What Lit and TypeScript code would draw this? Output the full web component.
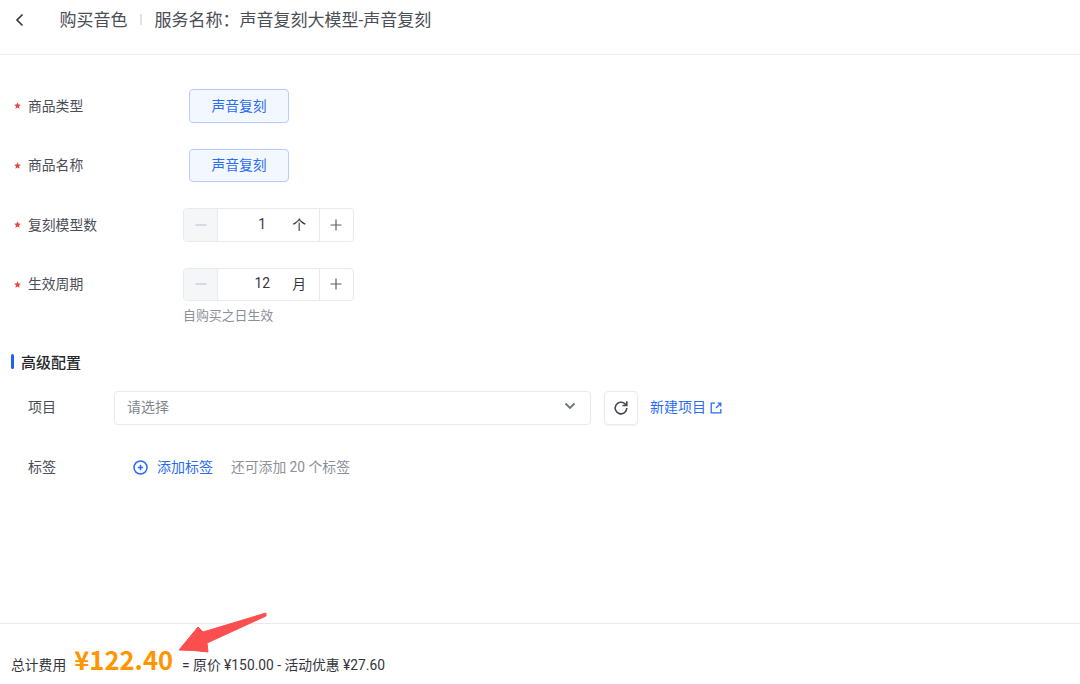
import { LitElement, html, css, svg } from "lit";
import { customElement } from "lit/decorators.js";

const stepper = (value: string, unit: string) => html`
  <div class="stepper">
    <span class="step minus"><svg width="12" height="12" viewBox="0 0 12 12"><path d="M0.5 6H11.5" stroke="#c3c8d2" stroke-width="1.2"/></svg></span>
    <span class="val"><span class="num">${value}</span><span class="unit">${unit}</span></span>
    <span class="step plus"><svg width="12" height="12" viewBox="0 0 12 12"><path d="M0.5 6H11.5M6 0.5V11.5" stroke="#5a6070" stroke-width="1.2"/></svg></span>
  </div>`;

const star = html`<span class="star"><svg width="7" height="7" viewBox="0 0 10 10"><path d="M5 0.3L6.4 3.5L9.8 3.8L7.2 6.1L8 9.600L5 7.800L2 9.600L2.800 6.100L0.2 3.800L3.600 3.500Z" fill="#e5483f"/></svg></span>`;

@customElement("app-root")
export class AppRoot extends LitElement {
  static styles = css`
    :host {
      display: flex;
      flex-direction: column;
      width: 1080px;
      height: 684px;
      position: relative;
      overflow: hidden;
      background: #fff;
      font-family: Roboto, "Noto Sans CJK SC", sans-serif;
      font-size: 13.8px;
      color: #4a4e56;
    }
    .top {
      height: 55px;
      box-sizing: border-box;
      border-bottom: 1px solid #f0f1f3;
      display: flex;
      align-items: flex-start;
      padding: 8px 0 0 15px;
      font-size: 17px;
      line-height: 24px;
      flex: none;
    }
    .back { display: flex; width: 44.500px; height: 24px; align-items: center; }
    .sep { width: 2px; height: 11px; background: #dfe1e6; margin: 6px 13px 0 12px; }
    .form { padding-top: 34px; flex: none; }
    .row { display: flex; align-items: flex-start; height: 34px; margin-bottom: 25.5px; }
    .label { display: flex; align-items: center; width: 183px; padding: 0 0 3px 14px; box-sizing: border-box; height: 34px; }
    .star { width: 14px; display: flex; align-items: center; padding-top: 2px; flex: none; }
    .chip {
      margin-left: 6px;
      width: 100px; height: 33.500px; box-sizing: border-box; padding-bottom: 2px;
      border: 1.4px solid #b5ceff; border-radius: 4px; background: #f3f7ff; color: #2b6cf6;
      display: flex; align-items: center; justify-content: center;
    }
    .stepper {
      width: 171px; height: 33.500px; box-sizing: border-box;
      border: 1px solid #e8eaee; border-radius: 4px;
      display: flex; align-items: stretch; color: #33363c;
    }
    .step { width: 33px; display: flex; align-items: center; justify-content: center; flex: none; box-sizing: content-box; }
    .minus { background: #f5f6f8; border-right: 1px solid #e8eaee; border-radius: 3px 0 0 3px; }
    .plus { border-left: 1px solid #e8eaee; padding-right: 1px; width: 32px; }
    .val { flex: 1; display: flex; align-items: center; justify-content: flex-end; padding: 0 13px 2px 0; }
    .num { width: 60px; text-align: center; }
    .hint { margin: -20px 0 0 183px; color: #8b9099; font-size: 12.900px; line-height: 18px; }
    .heading {
      display: flex; align-items: center; margin: 26.500px 0 0 11px;
      font-weight: 500; font-size: 15px; color: #26282c; height: 20px;
    }
    .bar { width: 3px; height: 15px; border-radius: 2px; background: #1f62f5; margin-right: 7px; }
    .adv { padding: 19px 0 0 28px; flex: none; font-size: 14px; }
    .adv-row { display: flex; align-items: center; height: 34px; margin-bottom: 26px; }
    .adv-label { width: 86px; flex: none; padding-bottom: 3px; }
    .select {
      width: 477px; height: 34px; box-sizing: border-box;
      border: 1px solid #e8eaee; border-radius: 4px;
      display: flex; align-items: center; justify-content: space-between;
      padding: 0 14px 3px 12px; color: #83888f;
    }
    .refresh {
      width: 34px; height: 34px; box-sizing: border-box; margin-left: 13px;
      border: 1px solid #e8eaee; border-radius: 4px;
      display: flex; align-items: center; justify-content: center;
      box-shadow: 0 1px 2px rgba(30, 40, 70, 0.06);
    }
    .link { color: #2b6cf6; display: flex; align-items: center; padding-bottom: 3px; }
    .new { margin-left: 12px; }
    .new svg { margin-left: 4px; margin-top: 3px; }
    .add { margin-left: 19px; }
    .add svg { margin-right: 9px; margin-top: 2px; }
    .remain { margin-left: 18px; color: #8b9099; padding-bottom: 3px; font-size: 13.800px; }
    .footer {
      margin-top: auto;
      height: 61px; box-sizing: border-box;
      border-top: 1px solid #e8e9ec;
      display: flex; align-items: baseline;
      padding: 17px 0 0 11px;
      color: #33363c;
      flex: none;
    }
    .price { color: #ff9500; font-family: "Noto Sans CJK SC", sans-serif; font-size: 25.600px; font-weight: 700; margin: 0 9px 0 8px; line-height: 36px; }
    .arrow { position: absolute; left: 175px; top: 608px; }
  `;

  render() {
    return html`
      <div class="top">
        <span class="back"><svg width="10" height="14" viewBox="0 0 10 14"><path d="M7.500 1.500L2 7L7.500 12.500" fill="none" stroke="#33363c" stroke-width="1.600"/></svg></span>
        <span>购买音色</span><span class="sep"></span><span>服务名称：声音复刻大模型-声音复刻</span>
      </div>
      <div class="form">
        <div class="row"><span class="label">${star}商品类型</span><span class="chip">声音复刻</span></div>
        <div class="row"><span class="label">${star}商品名称</span><span class="chip">声音复刻</span></div>
        <div class="row"><span class="label">${star}复刻模型数</span>${stepper("1", "个")}</div>
        <div class="row"><span class="label">${star}生效周期</span>${stepper("12", "月")}</div>
        <div class="hint">自购买之日生效</div>
      </div>
      <div class="heading"><span class="bar"></span>高级配置</div>
      <div class="adv">
        <div class="adv-row">
          <span class="adv-label">项目</span>
          <div class="select">请选择<svg width="12" height="8" viewBox="0 0 12 8"><path d="M1.500 1.500L6 6L10.500 1.500" fill="none" stroke="#6d727b" stroke-width="1.800"/></svg></div>
          <div class="refresh"><svg width="16" height="16" viewBox="0 0 16 16" fill="none" stroke="#44474d" stroke-width="1.600"><path d="M13.800 8a5.800 5.800 0 1 1-1.700-4.100L13.800 5.500"/><path d="M13.800 1.200V5.500H9.500"/></svg></div>
          <span class="link new">新建项目<svg width="12" height="12" viewBox="0 0 12 12" fill="none" stroke="#2b6cf6" stroke-width="1.300"><path d="M5 1.200H1.200V10.800H10.800V7"/><path d="M6 6L10.800 1.200M7.600 1.200H10.800V4.400"/></svg></span>
        </div>
        <div class="adv-row">
          <span class="adv-label">标签</span>
          <span class="link add"><svg width="15" height="15" viewBox="0 0 15 15" fill="none" stroke="#2b6cf6" stroke-width="1.500"><circle cx="7.500" cy="7.500" r="6.500"/><path d="M4.800 7.500H10.200M7.500 4.800V10.200"/></svg>添加标签</span>
          <span class="remain">还可添加 20 个标签</span>
        </div>
      </div>
      <div class="footer">
        <span>总计费用</span><span class="price">¥122.40</span><span>= 原价 ¥150.00 - 活动优惠 ¥27.60</span>
      </div>
      <svg class="arrow" width="95" height="46" viewBox="0 0 95 46">${svg`<path d="M4 42L23 19L28 24L91 5L91 8L32 35L33 44Q18 42 4 42Z" fill="#fb4f4f" stroke="#fb4f4f" stroke-width="1" stroke-linejoin="round"/>`}</svg>
    `;
  }
}
